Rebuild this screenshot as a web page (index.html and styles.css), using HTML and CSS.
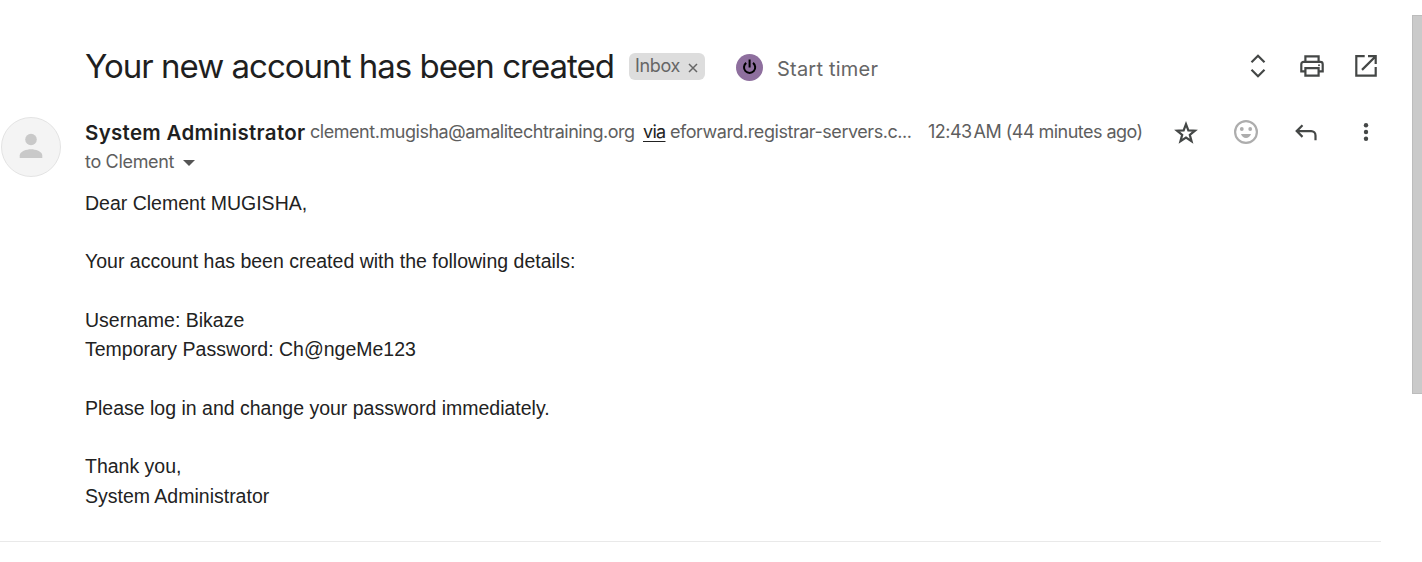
FILE: index.html
```html
<!DOCTYPE html>
<html lang="en">
<head>
<meta charset="utf-8">
<title>Your new account has been created</title>
<link rel="stylesheet" href="styles.css">
</head>
<body>
<main class="mail">
  <header class="subject">
    <h1 class="subject-title">Your new account has been created</h1>
    <span class="label"><span class="label-name">Inbox</span><svg class="label-close" viewBox="0 0 10 10"><path d="M1 1l8 8M9 1L1 9"/></svg></span>
    <svg class="timer-icon" viewBox="0 0 28 28"><circle class="timer-disc" cx="13.500" cy="13.500" r="13.5"/><path class="timer-power" d="M10.200 8.900a5.600 5.600 0 1 0 6.800 0M13.600 5.500v8"/></svg>
    <span class="timer-text">Start timer</span>
    <div class="tools tools-wide">
      <svg class="icon" viewBox="0 0 24 24"><path class="line" d="M5.500 8.200L12 1.700l6.500 6.500M5.500 15.800L12 22.300l6.500-6.500"/></svg>
      <svg class="icon" viewBox="0 0 24 24"><path class="line" d="M5.400 17.300H1.300V10.200a2.300 2.300 0 0 1 2.300-2.300h16.800a2.300 2.300 0 0 1 2.300 2.300v7.100h-4.100M5.400 7.900V2.300h13.200v5.600M5.400 14.200h13.200v7.500H5.400z"/><circle class="fill" cx="19" cy="11.200" r="1"/></svg>
      <svg class="icon" viewBox="0 0 24 24"><path class="line" d="M10.700 2.200H2.300v19.500h19.400v-8.600M14 2.200h7.700v7.700M21.700 2.200L8 15.900"/></svg>
    </div>
  </header>
  <section class="message">
    <svg class="avatar" viewBox="0 0 60 60"><circle class="avatar-disc" cx="30" cy="30" r="29.5"/><circle class="avatar-person" cx="30" cy="22.5" r="5.8"/><path class="avatar-person" d="M18.700 41v-2.600c0-4.200 7-6.200 11.300-6.200s11.300 2 11.300 6.200V41z"/></svg>
    <div class="content">
      <div class="sender-row">
        <span class="sender">System Administrator</span>
        <span class="address">clement.mugisha@amalitechtraining.org</span>
        <span class="via">via</span>
        <span class="relay">eforward.registrar-servers.c...</span>
        <span class="date">12:43<span class="meridiem">AM</span> (44 minutes ago)</span>
        <div class="tools">
          <svg class="icon" viewBox="0 0 24 24"><path class="line" d="M12 4.200l2.350 6.200 6.600.3-5.150 4.150 1.750 6.350L12 17.600l-5.550 3.600 1.750-6.350-5.150-4.150 6.600-.3z"/></svg>
          <svg class="icon smile" viewBox="0 0 24 24"><circle class="line" cx="12" cy="12" r="10.9"/><circle class="fill" cx="7.8" cy="9" r="1.9"/><circle class="fill" cx="16.2" cy="9" r="1.9"/><path class="fill" d="M7 14h10c-.6 2.400-2.600 3.900-5 3.900S7.600 16.400 7 14z"/></svg>
          <svg class="icon" viewBox="0 0 24 24"><path class="line" d="M8.500 5.300L2.700 11.100l5.800 5.800M2.700 11.100h14.500a4.300 4.300 0 0 1 4.300 4.300V20.300"/></svg>
          <svg class="icon" viewBox="0 0 24 24"><circle class="fill" cx="12" cy="5.200" r="2.200"/><circle class="fill" cx="12" cy="12" r="2.200"/><circle class="fill" cx="12" cy="18.800" r="2.200"/></svg>
        </div>
      </div>
      <div class="recipient"><span class="recipient-name">to Clement</span><svg class="caret" viewBox="0 0 12 6"><path d="M0 0h12L6 6z"/></svg></div>
      <div class="body">
        <p>Dear Clement MUGISHA,</p>
        <p>Your account has been created with the following details:</p>
        <p>Username: Bikaze<br>Temporary Password: Ch@ngeMe123</p>
        <p>Please log in and change your password immediately.</p>
        <p>Thank you,<br>System Administrator</p>
      </div>
    </div>
  </section>
</main>
<div class="scrollbar"></div>
</body>
</html>
```
FILE: styles.css
```css
* { box-sizing: border-box; }
body {
  margin: 0;
  height: 562px;
  overflow: hidden;
  display: flex;
  justify-content: space-between;
  background: #fff;
  color: #5e5e5e;
  font-family: Inter, "Liberation Sans", sans-serif;
  font-size: 18px;
  white-space: nowrap;
}
.mail {
  width: 1381px;
  height: 542px;
  padding-top: 36px;
  border-bottom: 1px solid #e9e9e9;
}
.subject {
  height: 60px;
  padding: 0 3px 0 85px;
  display: flex;
  align-items: center;
}
.subject-title {
  margin: 0;
  width: 544px;
  color: #1f1f1f;
  font-size: 33px;
  font-weight: 400;
  line-height: 40px;
  letter-spacing: -0.98px;
}
.label {
  width: 76px;
  height: 27px;
  margin-top: 1px;
  padding: 0 7px 2px 6px;
  display: flex;
  align-items: center;
  justify-content: space-between;
  border-radius: 6px;
  background: #ddd;
  color: #666;
}
.label-name { letter-spacing: -0.35px; }
.label-close {
  width: 10px;
  height: 10px;
  margin-top: 5px;
  fill: none;
  stroke: #666;
  stroke-width: 1.5;
}
.timer-icon { width: 28px; height: 28px; margin: 4px 13px 0 31px; }
.timer-disc { fill: #8e6f9e; }
.timer-power { fill: none; stroke: #000; stroke-width: 2; }
.timer-text { margin-top: 5px; font-size: 20px; letter-spacing: 0.22px; color: #666; }
.tools { margin-left: auto; display: flex; gap: 36px; }
.tools-wide { gap: 30px; }
.icon { width: 24px; height: 24px; overflow: visible; }
.line { fill: none; stroke: #444746; stroke-width: 2.2; }
.fill { fill: #444746; }
.smile .line { stroke: #adadad; }
.smile .fill { fill: #adadad; }
.message { display: flex; padding: 21px 3px 0 1px; }
.avatar { width: 60px; height: 60px; margin-right: 24px; flex: none; }
.avatar-disc { fill: #f4f4f4; stroke: #e3e3e3; }
.avatar-person { fill: #c9c9c9; }
.content { flex: 1; }
.sender-row { height: 30px; display: flex; align-items: center; }
.sender { width: 225px; color: #1f1f1f; font-size: 20.5px; font-weight: 600; letter-spacing: 0.3px; }
.address, .via, .relay, .date { padding-bottom: 1px; }
.address { width: 333px; letter-spacing: -0.46px; }
.via { width: 27px; color: #222; letter-spacing: -0.7px; text-decoration: underline; text-underline-offset: 3px; }
.relay { width: 258px; letter-spacing: -0.45px; }
.date { letter-spacing: -0.53px; }
.meridiem { margin-left: 2px; }
.recipient { height: 30px; display: flex; align-items: center; }
.recipient-name { width: 98px; padding-bottom: 1px; letter-spacing: -0.32px; }
.caret { width: 12px; height: 6px; margin-top: 1px; fill: #555; }
.body {
  margin-top: 11.8px;
  color: #222;
  font: 19.5px/29.3px "Liberation Sans", sans-serif;
}
.body p { margin: 0 0 29.3px; }
.scrollbar {
  width: 10px;
  height: 379px;
  margin-top: 15px;
  border: 1px solid #bcbcbc;
  border-right: 0;
  background: #cacaca;
}
```
